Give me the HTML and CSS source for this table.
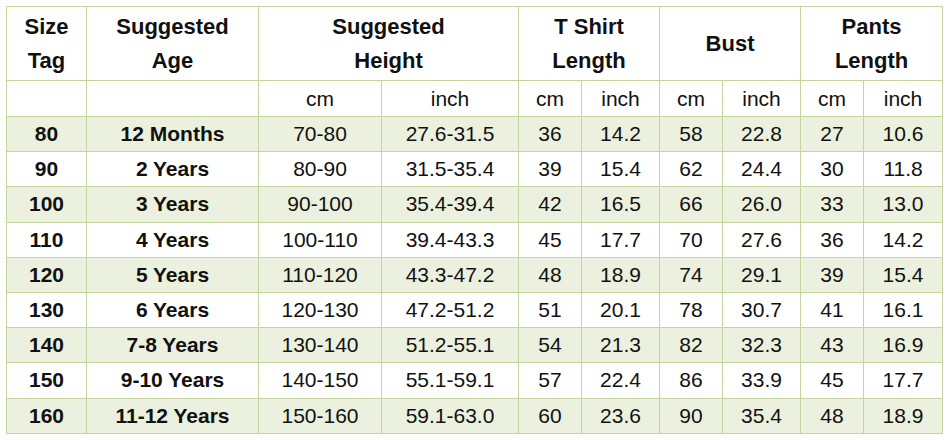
FILE: index.html
```html
<!DOCTYPE html>
<html>
<head>
<meta charset="utf-8">
<link rel="stylesheet" href="styles.css">
</head>
<body>
<table class="size-table">
  <colgroup>
    <col class="c-tag"><col class="c-age"><col class="c-hcm"><col class="c-hin">
    <col class="c-cm"><col class="c-in"><col class="c-cm"><col class="c-in">
    <col class="c-cm"><col class="c-in2">
  </colgroup>
  <thead>
    <tr class="head">
      <th>Size<br>Tag</th>
      <th>Suggested<br>Age</th>
      <th colspan="2">Suggested<br>Height</th>
      <th colspan="2">T Shirt<br>Length</th>
      <th colspan="2">Bust</th>
      <th colspan="2">Pants<br>Length</th>
    </tr>
    <tr class="units">
      <td></td><td></td>
      <td>cm</td><td>inch</td><td>cm</td><td>inch</td><td>cm</td><td>inch</td><td>cm</td><td>inch</td>
    </tr>
  </thead>
  <tbody>
    <tr class="alt"><th>80</th><th>12 Months</th><td>70-80</td><td>27.6-31.5</td><td>36</td><td>14.2</td><td>58</td><td>22.8</td><td>27</td><td>10.6</td></tr>
    <tr><th>90</th><th>2 Years</th><td>80-90</td><td>31.5-35.4</td><td>39</td><td>15.4</td><td>62</td><td>24.4</td><td>30</td><td>11.8</td></tr>
    <tr class="alt"><th>100</th><th>3 Years</th><td>90-100</td><td>35.4-39.4</td><td>42</td><td>16.5</td><td>66</td><td>26.0</td><td>33</td><td>13.0</td></tr>
    <tr><th>110</th><th>4 Years</th><td>100-110</td><td>39.4-43.3</td><td>45</td><td>17.7</td><td>70</td><td>27.6</td><td>36</td><td>14.2</td></tr>
    <tr class="alt"><th>120</th><th>5 Years</th><td>110-120</td><td>43.3-47.2</td><td>48</td><td>18.9</td><td>74</td><td>29.1</td><td>39</td><td>15.4</td></tr>
    <tr><th>130</th><th>6 Years</th><td>120-130</td><td>47.2-51.2</td><td>51</td><td>20.1</td><td>78</td><td>30.7</td><td>41</td><td>16.1</td></tr>
    <tr class="alt"><th>140</th><th>7-8 Years</th><td>130-140</td><td>51.2-55.1</td><td>54</td><td>21.3</td><td>82</td><td>32.3</td><td>43</td><td>16.9</td></tr>
    <tr><th>150</th><th>9-10 Years</th><td>140-150</td><td>55.1-59.1</td><td>57</td><td>22.4</td><td>86</td><td>33.9</td><td>45</td><td>17.7</td></tr>
    <tr class="alt"><th>160</th><th>11-12 Years</th><td>150-160</td><td>59.1-63.0</td><td>60</td><td>23.6</td><td>90</td><td>35.4</td><td>48</td><td>18.9</td></tr>
  </tbody>
</table>
</body>
</html>
```

FILE: styles.css
```css
html, body {
  margin: 0;
  padding: 0;
  background: #ffffff;
}
body {
  padding: 6px;
  font-family: "Liberation Sans", Arial, sans-serif;
  color: #111;
}
.size-table {
  border-collapse: collapse;
  table-layout: fixed;
  width: 937px;
}
.c-tag { width: 80px; }
.c-age { width: 172px; }
.c-hcm { width: 123px; }
.c-hin { width: 137px; }
.c-cm { width: 63px; }
.c-in { width: 78px; }
.c-in2 { width: 79px; }

.size-table th,
.size-table td {
  border: 1px solid #c3d69b;
  text-align: center;
  vertical-align: middle;
  padding: 0;
  font-size: 21px;
  line-height: 24px;
}
.size-table th { font-weight: bold; }
.size-table td { font-weight: normal; }

.head th {
  height: 73px;
  font-size: 22px;
  line-height: 34px;
}
.units td { height: 35px; }
tbody tr { height: 35.2px; }
tbody tr.alt { background: #ebf1de; }
```
